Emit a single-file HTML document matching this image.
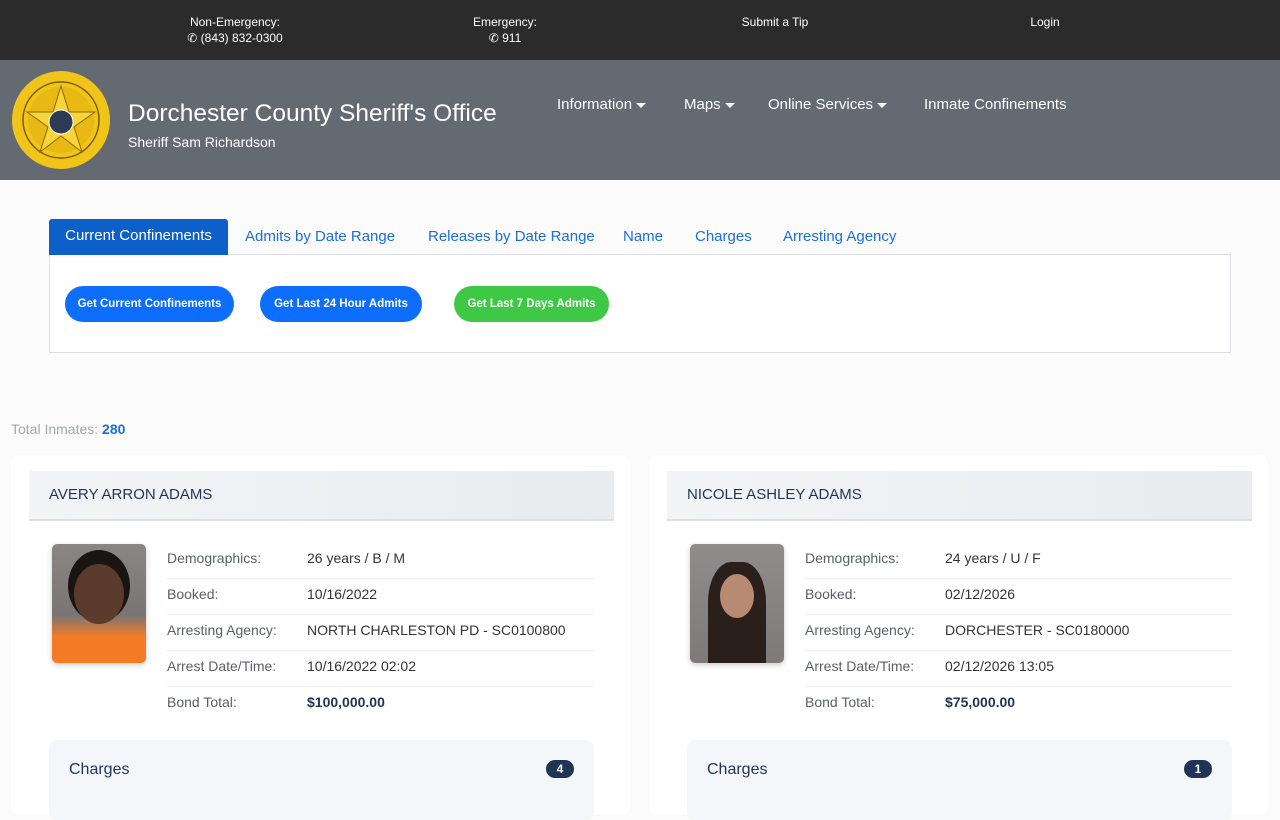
<!DOCTYPE html>
<html><head><meta charset="utf-8"><style>
*{margin:0;padding:0;box-sizing:border-box}
body{width:1280px;height:800px;overflow:hidden;background:#fbfbfc;font-family:"Liberation Sans",sans-serif;position:relative}
.top{position:absolute;left:0;top:0;width:1280px;height:60px;background:#2b2b2b;color:#fff;font-size:12px}
.top div{position:absolute;text-align:center;line-height:16px}
.hdr{position:absolute;left:0;top:60px;width:1280px;height:120px;background:#636a72;color:#fff}
.abs{position:absolute}
.nav{position:absolute;top:96px;font-size:15px;color:#fff}
.caret{display:inline-block;border-left:5px solid transparent;border-right:5px solid transparent;border-top:5px solid #fff;vertical-align:middle;margin-left:4px}
.tabs a{position:absolute;top:228px;font-size:15px;color:#1a6fd8}
.btn{position:absolute;top:286px;height:36px;border-radius:18px;color:#fff;font-size:11.5px;font-weight:bold;text-align:center;line-height:36px}
.card{position:absolute;top:455px;width:619px;height:360px;background:#fff;border-radius:8px}
.ch{position:absolute;left:18px;top:16px;width:585px;height:50px;background:linear-gradient(90deg,#f3f4f6,#e9ebef);border-bottom:2px solid #dcdfe3;color:#1f3558;font-size:15px;line-height:48px;padding-left:20px}
.ph{position:absolute;left:41px;top:89px;width:94px;height:119px;border-radius:5px;box-shadow:0 2px 6px rgba(0,0,0,.2);overflow:hidden}
.row{position:absolute;left:156px;width:427px;height:36px;border-bottom:1px solid #eceef1;font-size:14px;line-height:30px}
.row span{position:absolute;left:0;color:#5a606a}
.row b{position:absolute;left:140px;font-weight:normal;color:#333}
.chg{position:absolute;left:38px;top:285px;width:545px;height:80px;background:#f4f6f9;border-radius:8px;font-size:16px;color:#1f3558;padding:21px 20px}
.badge{position:absolute;right:20px;top:20px;width:28px;height:18px;border-radius:9px;background:#1f3558;color:#fff;font-size:12px;font-weight:bold;text-align:center;line-height:18px}
</style></head><body>
<div class="top">
<div style="left:175px;top:14px;width:120px">Non-Emergency:<br>&#9990; (843) 832-0300</div>
<div style="left:455px;top:14px;width:100px">Emergency:<br>&#9990; 911</div>
<div style="left:725px;top:14px;width:100px">Submit a Tip</div>
<div style="left:1005px;top:14px;width:80px">Login</div>
</div>
<div class="hdr">
<svg class="abs" style="left:11px;top:10px" width="100" height="100" viewBox="0 0 100 100"><circle cx="50" cy="50" r="49" fill="#f0c419"/><circle cx="50" cy="50" r="38" fill="none" stroke="#7a5a00" stroke-width="1.5"/><circle cx="50" cy="50" r="33" fill="#e8b914"/><polygon points="50,16 58,42 84,42 63,57 71,82 50,66 29,82 37,57 16,42 42,42" fill="#f7d43a" stroke="#8a6a00"/><circle cx="50" cy="52" r="12" fill="#2d3b55" stroke="#fff"/></svg>
<div class="abs" style="left:128px;top:40px;font-size:24.5px">Dorchester County Sheriff's Office</div>
<div class="abs" style="left:128px;top:74px;font-size:14px">Sheriff Sam Richardson</div>
</div>
<div class="nav" style="left:557px">Information<span class="caret"></span></div>
<div class="nav" style="left:684px">Maps<span class="caret"></span></div>
<div class="nav" style="left:768px">Online Services<span class="caret"></span></div>
<div class="nav" style="left:924px">Inmate Confinements</div>
<div class="abs" style="left:49px;top:254px;width:1182px;height:99px;border:1px solid #dadde1;background:#fff"></div>
<div class="abs" style="left:49px;top:219px;width:179px;height:36px;background:#0d5fc9;color:#fff;font-size:15px;line-height:34px;text-align:center;border-radius:3px 3px 0 0">Current Confinements</div>
<div class="tabs"><a style="left:245px">Admits by Date Range</a><a style="left:428px">Releases by Date Range</a><a style="left:623px">Name</a><a style="left:695px">Charges</a><a style="left:783px">Arresting Agency</a></div>
<div class="btn" style="left:65px;width:169px;background:#0d6efd">Get Current Confinements</div>
<div class="btn" style="left:260px;width:162px;background:#0d6efd">Get Last 24 Hour Admits</div>
<div class="btn" style="left:454px;width:155px;background:#3ec845">Get Last 7 Days Admits</div>
<div class="abs" style="left:11px;top:421px;font-size:14px;color:#a3a8ae">Total Inmates: <b style="color:#1a6fd8">280</b></div>
<div class="card" style="left:11px">
<div class="ch">AVERY ARRON ADAMS</div>
<div class="ph" style="background:linear-gradient(#8a8685 0,#7a7574 60%,#f57a25 78%,#f57a25)"><div style="position:absolute;left:22px;top:20px;width:50px;height:60px;border-radius:50%;background:#5a3b2c;box-shadow:0 -8px 0 6px #1a1512"></div></div>
<div class="row" style="top:88px"><span>Demographics:</span><b>26 years / B / M</b></div>
<div class="row" style="top:124px"><span>Booked:</span><b>10/16/2022</b></div>
<div class="row" style="top:160px"><span>Arresting Agency:</span><b>NORTH CHARLESTON PD - SC0100800</b></div>
<div class="row" style="top:196px"><span>Arrest Date/Time:</span><b>10/16/2022 02:02</b></div>
<div class="row" style="top:232px;border:none"><span>Bond Total:</span><b style="font-weight:bold;color:#1f3558">$100,000.00</b></div>
<div class="chg">Charges<div class="badge">4</div></div>
</div>
<div class="card" style="left:649px">
<div class="ch">NICOLE ASHLEY ADAMS</div>
<div class="ph" style="background:linear-gradient(#8f8c8c,#7d7a7a)"><div style="position:absolute;left:18px;top:18px;width:58px;height:101px;border-radius:40% 40% 0 0;background:#2a1f1b"></div><div style="position:absolute;left:30px;top:30px;width:34px;height:44px;border-radius:50%;background:#b88a72"></div></div>
<div class="row" style="top:88px"><span>Demographics:</span><b>24 years / U / F</b></div>
<div class="row" style="top:124px"><span>Booked:</span><b>02/12/2026</b></div>
<div class="row" style="top:160px"><span>Arresting Agency:</span><b>DORCHESTER - SC0180000</b></div>
<div class="row" style="top:196px"><span>Arrest Date/Time:</span><b>02/12/2026 13:05</b></div>
<div class="row" style="top:232px;border:none"><span>Bond Total:</span><b style="font-weight:bold;color:#1f3558">$75,000.00</b></div>
<div class="chg">Charges<div class="badge">1</div></div>
</div>
</body></html>
